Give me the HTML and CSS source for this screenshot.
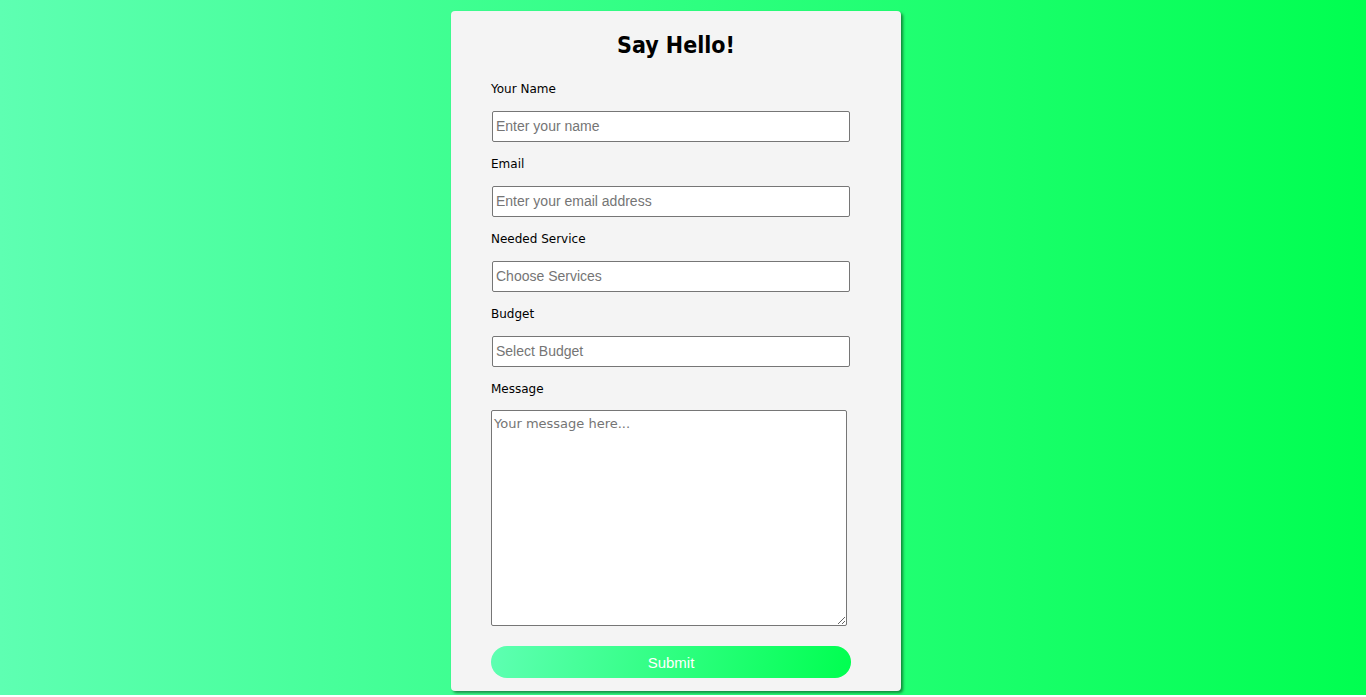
FILE: index.html
```html
<!DOCTYPE html>
<html>
<head>
<meta charset="utf-8">
<link rel="stylesheet" href="styles.css">
</head>
<body>
<div class="page">
  <form class="card">
    <h2 class="title">Say Hello!</h2>
    <label class="label">Your Name</label>
    <input class="field" type="text" placeholder="Enter your name">
    <label class="label">Email</label>
    <input class="field" type="text" placeholder="Enter your email address">
    <label class="label">Needed Service</label>
    <input class="field" type="text" placeholder="Choose Services">
    <label class="label">Budget</label>
    <input class="field" type="text" placeholder="Select Budget">
    <label class="label">Message</label>
    <textarea class="message" placeholder="Your message here..."></textarea>
    <button class="submit" type="button">Submit</button>
  </form>
</div>
</body>
</html>
```
FILE: styles.css
```css
html, body {
  margin: 0;
  padding: 0;
  background: #ffffff;
}
.page {
  height: 695px;
  box-sizing: border-box;
  padding: 11px 14px 0 0;
  background: linear-gradient(to right, #5effb2, #00ff50);
  display: flex;
  justify-content: center;
  align-items: flex-start;
}
.card {
  width: 450px;
  box-sizing: border-box;
  padding: 18px 50px 13px 40px;
  background: #f4f4f4;
  border-radius: 4px;
  box-shadow: 2px 2px 3px rgba(0, 40, 10, 0.55);
  display: flex;
  flex-direction: column;
  font-family: "DejaVu Sans", Verdana, sans-serif;
}
.title {
  margin: 0 -10px 6px 0;
  text-align: center;
  font-family: "DejaVu Sans Condensed", "DejaVu Sans", sans-serif;
  font-size: 23px;
  font-weight: bold;
  line-height: 32px;
  color: #000;
}
.label {
  font-size: 12px;
  line-height: 14px;
  color: #000;
  margin-top: 15px;
}
.field {
  margin: 15px 0 0 1px;
  width: 358px;
  height: 31px;
  box-sizing: border-box;
  border: 1px solid #767676;
  border-radius: 2px;
  padding: 0 3px 1px;
  font-family: "Liberation Sans", Arial, sans-serif;
  font-size: 14px;
  background: #fff;
}
.field::placeholder, .message::placeholder {
  color: #757575;
}
.message {
  margin: 14px 0 0 0;
  width: 356px;
  height: 216px;
  box-sizing: border-box;
  border: 1px solid #767676;
  border-radius: 2px;
  padding: 5px 2px 3px;
  font-family: "DejaVu Sans", Verdana, sans-serif;
  font-size: 13px;
  background: #fff;
  resize: both;
}
.submit {
  margin-top: 20px;
  width: 360px;
  height: 32px;
  border: none;
  border-radius: 16px;
  background: linear-gradient(100deg, #5effb2, #00ff50);
  color: #fff;
  font-family: "Liberation Sans", Arial, sans-serif;
  font-size: 15px;
}
```
